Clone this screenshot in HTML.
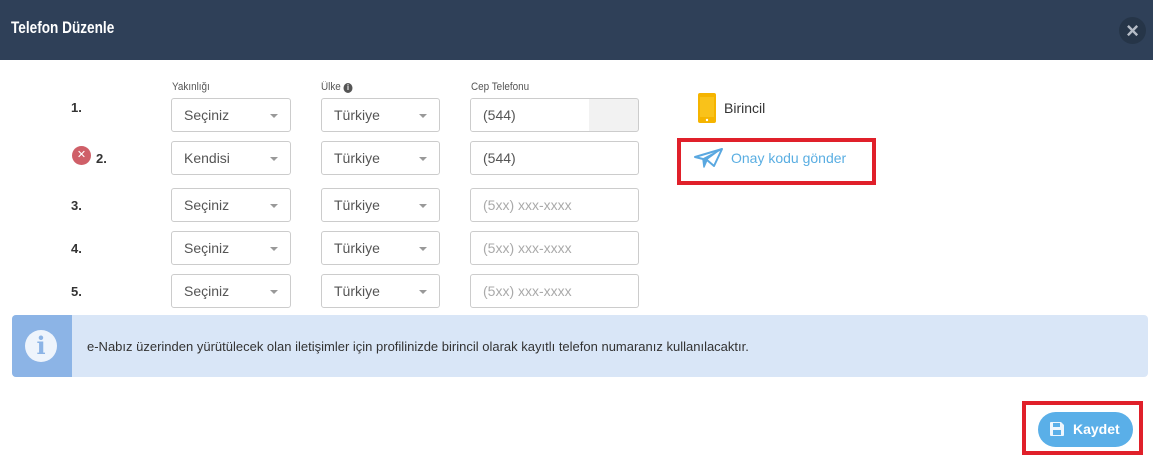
<!DOCTYPE html>
<html><head><meta charset="utf-8"><style>
*{box-sizing:border-box;margin:0;padding:0}
body{width:1153px;height:459px;background:#fff;font-family:"Liberation Sans",sans-serif;position:relative;overflow:hidden;color:#333}
.hdr{position:absolute;left:0;top:0;width:1153px;height:60px;background:#2f4058}
.hdr h1{position:absolute;left:11px;top:18px;color:#fff;font-size:17px;font-weight:bold;transform:scaleX(0.8);transform-origin:left;white-space:nowrap}
.close{position:absolute;left:1119px;top:17px;width:27px;height:27px;border-radius:50%;background:#263548;color:#b5bcc6;font-size:22px;text-align:center;line-height:27px;font-weight:bold}
.lbl{position:absolute;top:81px;font-size:11px;color:#555;transform:scaleX(0.9);transform-origin:left;white-space:nowrap}
.num{position:absolute;left:71px;font-size:13px;font-weight:bold;color:#333}
.sel,.inp{position:absolute;height:34px;border:1px solid #ccc;border-radius:3px;font-size:14px;color:#555;padding-left:12px;line-height:32px;overflow:hidden}
.sel::after{content:"";position:absolute;right:12px;top:15px;border-left:4px solid transparent;border-right:4px solid transparent;border-top:4px solid #999}
.s1{left:171px;width:120px}.s2{left:321px;width:119px}.inp{left:470px;width:169px}
.ph{color:#aaa}
.info{position:absolute;left:12px;top:315px;width:1136px;height:62px;background:#d9e6f7;border-radius:4px;overflow:hidden}
.info .ic{position:absolute;left:0;top:0;width:60px;height:62px;background:#8cb4e6}
.info .ic div{position:absolute;left:13px;top:15px;width:32px;height:32px;border-radius:50%;background:#eef4fc;color:#8cb4e6;font:bold 24px "DejaVu Serif","Liberation Serif",serif;text-align:center;line-height:32px}
.info p{position:absolute;left:75px;top:24px;font-size:13px;color:#333}
.red{position:absolute;border:4px solid #e0202a}
</style></head><body>
<div class="hdr"><h1>Telefon Düzenle</h1><div class="close">×</div></div>
<div class="lbl" style="left:172px">Yakınlığı</div>
<div class="lbl" style="left:321px">Ülke <span style="display:inline-block;width:10px;height:10px;border-radius:50%;background:#555;color:#fff;font-size:8px;text-align:center;line-height:10px;font-weight:bold">i</span></div>
<div class="lbl" style="left:471px">Cep Telefonu</div>

<div class="num" style="top:100px">1.</div>
<div class="sel s1" style="top:98px">Seçiniz</div><div class="sel s2" style="top:98px">Türkiye</div>
<div class="inp" style="top:98px;background:#f2f2f2;padding-left:0"><span style="display:inline-block;background:#fff;padding-left:12px;width:118px;height:32px">(544)</span></div>

<div style="position:absolute;left:72px;top:146px;width:19px;height:19px;border-radius:50%;background:#cf5f68;color:#fff;font-size:11px;text-align:center;line-height:19px">✕</div>
<div class="num" style="top:151px;left:96px">2.</div>
<div class="sel s1" style="top:141px">Kendisi</div><div class="sel s2" style="top:141px">Türkiye</div>
<div class="inp" style="top:141px">(544)</div>

<div class="num" style="top:198px">3.</div>
<div class="sel s1" style="top:188px">Seçiniz</div><div class="sel s2" style="top:188px">Türkiye</div><div class="inp ph" style="top:188px">(5xx) xxx-xxxx</div>
<div class="num" style="top:241px">4.</div>
<div class="sel s1" style="top:231px">Seçiniz</div><div class="sel s2" style="top:231px">Türkiye</div><div class="inp ph" style="top:231px">(5xx) xxx-xxxx</div>
<div class="num" style="top:284px">5.</div>
<div class="sel s1" style="top:274px">Seçiniz</div><div class="sel s2" style="top:274px">Türkiye</div><div class="inp ph" style="top:274px">(5xx) xxx-xxxx</div>

<svg style="position:absolute;left:698px;top:93px" width="18" height="30" viewBox="0 0 18 30"><rect x="0" y="0" width="18" height="30" rx="2" fill="#f5b400"/><rect x="2" y="4" width="14" height="20" fill="#f9c21a"/><circle cx="9" cy="27" r="1.2" fill="#fff"/></svg>
<div style="position:absolute;left:724px;top:100px;font-size:14px;color:#333">Birincil</div>

<div class="red" style="left:677px;top:138px;width:199px;height:47px"></div>
<svg style="position:absolute;left:694px;top:148px" width="29" height="20" viewBox="0 0 29 20"><path d="M1 9 L28 1 L20 18 L13 12 Z" fill="none" stroke="#5aa8e0" stroke-width="2" stroke-linejoin="round"/><path d="M13 12 L10 19 L9 11 L28 1" fill="#5aa8e0" stroke="#5aa8e0" stroke-width="1.5" stroke-linejoin="round"/></svg>
<div style="position:absolute;left:731px;top:150px;font-size:14px;color:#5aaee2">Onay kodu gönder</div>

<div class="info"><div class="ic"><div>i</div></div><p>e-Nabız üzerinden yürütülecek olan iletişimler için profilinizde birincil olarak kayıtlı telefon numaranız kullanılacaktır.</p></div>

<div class="red" style="left:1022px;top:401px;width:121px;height:54px"></div>
<div style="position:absolute;left:1038px;top:412px;width:95px;height:35px;border-radius:18px;background:#5aafe8;color:#fff;font-size:14px;font-weight:bold;line-height:35px;padding-left:35px">Kaydet</div>
<svg style="position:absolute;left:1050px;top:422px" width="14" height="14" viewBox="0 0 14 14"><path d="M0 1 Q0 0 1 0 L11 0 L14 3 L14 13 Q14 14 13 14 L1 14 Q0 14 0 13 Z" fill="#eef6fd"/><rect x="3" y="1" width="7" height="4" fill="#5aafe8"/><rect x="3" y="8" width="8" height="5" fill="#5aafe8"/></svg>
</body></html>
